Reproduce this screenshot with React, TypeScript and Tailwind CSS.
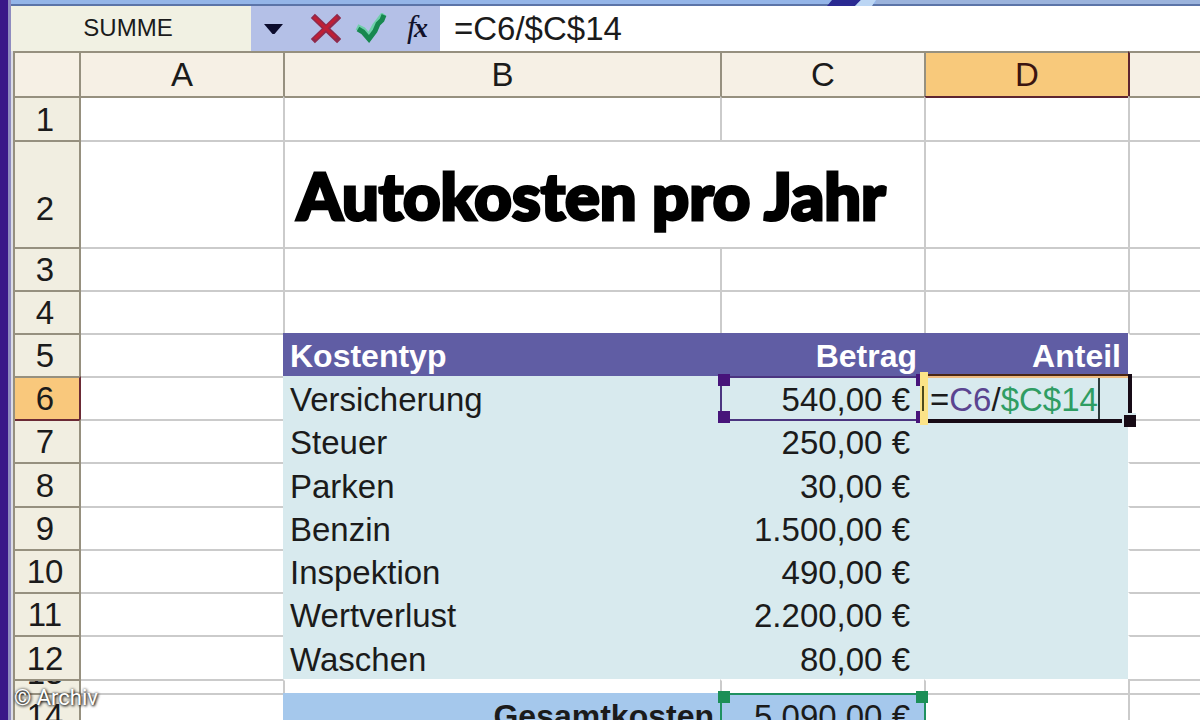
import { clsx } from 'clsx';
import { useState, type ReactNode } from 'react';

type Kind = 'blank' | 'title' | 'head' | 'item' | 'total';

interface Row {
  n: number;
  kind: Kind;
  height: string;
  label?: string;
  amount?: string;
}

const H = 'h-[41px]';
const H_TALL = 'h-[42px]';

const ROWS: Row[] = [
  { n: 1, kind: 'blank', height: H_TALL },
  { n: 2, kind: 'title', height: 'h-[105px]', label: 'Autokosten pro Jahr' },
  { n: 3, kind: 'blank', height: H },
  { n: 4, kind: 'blank', height: H },
  { n: 5, kind: 'head', height: H, label: 'Kostentyp', amount: 'Betrag' },
  { n: 6, kind: 'item', height: H, label: 'Versicherung', amount: '540,00 €' },
  { n: 7, kind: 'item', height: H, label: 'Steuer', amount: '250,00 €' },
  { n: 8, kind: 'item', height: H_TALL, label: 'Parken', amount: '30,00 €' },
  { n: 9, kind: 'item', height: H, label: 'Benzin', amount: '1.500,00 €' },
  { n: 10, kind: 'item', height: H, label: 'Inspektion', amount: '490,00 €' },
  { n: 11, kind: 'item', height: H, label: 'Wertverlust', amount: '2.200,00 €' },
  { n: 12, kind: 'item', height: H_TALL, label: 'Waschen', amount: '80,00 €' },
  { n: 13, kind: 'blank', height: 'h-[12px]' },
  { n: 14, kind: 'total', height: H, label: 'Gesamtkosten', amount: '5.090,00 €' },
];

const FILL: Record<Kind, string> = {
  blank: 'bg-white border-[#cbcbcb]',
  title: 'bg-white border-[#cbcbcb]',
  head: 'bg-[#605da4] border-[#605da4] text-white font-bold text-[32px]',
  item: 'bg-[#d8eaee] border-[#d8eaee]',
  total: 'bg-[#a5c8ec] border-[#a5c8ec]',
};

interface CellProps {
  height: string;
  className?: string;
  inner?: string;
  colSpan?: number;
  first?: boolean;
  overlay?: ReactNode;
  children?: ReactNode;
}

function Cell({ height, className, inner, colSpan, first, overlay, children }: CellProps) {
  return (
    <td colSpan={colSpan} className={clsx('relative border-t-2 p-0', !first && 'border-l-2', className)}>
      <div className={clsx('flex items-end whitespace-nowrap', height, inner)}>{children}</div>
      {overlay}
    </td>
  );
}

// frame around a cell that the formula refers to
function RefFrame({ line, handle }: { line: string; handle: string }) {
  return (
    <div className={clsx('pointer-events-none absolute -top-0.5 -right-0.5 -bottom-0.5 -left-0.5 z-10 border-2', line)}>
      <span className={clsx('absolute -top-1 -left-1 size-3', handle)} />
      <span className={clsx('absolute -top-1 -right-1 size-3', handle)} />
      <span className={clsx('absolute -bottom-1 -left-1 size-3', handle)} />
      <span className={clsx('absolute -right-1 -bottom-1 size-3', handle)} />
    </div>
  );
}

function EditFrame() {
  return (
    <div className="pointer-events-none absolute -top-1 -right-1 -bottom-1 -left-1 z-20">
      <span className="absolute top-0 right-0 left-0 h-1 border-t-2 border-b-2 border-t-[#4a2615] border-b-[#efbb80]" />
      <span className="absolute right-0 bottom-0 left-0 h-1 bg-[#170b16]" />
      <span className="absolute top-0 right-0 bottom-0 w-1 bg-[#170b16]" />
      <span className="absolute -top-0.5 -bottom-0.5 -left-0.5 w-2 bg-[#fbe387]" />
      <span className="absolute top-3 bottom-3 left-0 w-0.5 bg-[#4c4a1c]" />
      <span className="absolute -right-1 -bottom-1 size-3.5 border-t-2 border-l-2 border-[#d8eaee] bg-[#170b16]" />
    </div>
  );
}

function SheetRow({ row }: { row: Row }) {
  const { n, kind, height } = row;
  const plain = kind === 'blank' || kind === 'title';
  const active = n === 6;
  const wide = kind === 'head' || kind === 'item';
  const grid = n === 1 ? 'bg-white border-l-[#cbcbcb]' : FILL.blank;
  const top = n === 1 && 'border-t-[#96907f]';
  // no grid line between the coloured block and the row under it
  const below = n === 13 && 'border-t-white';

  return (
    <tr>
      <th
        scope="row"
        className={clsx(
          'border-t-2 border-r-2 p-0 font-normal',
          active ? 'border-t-[#96907f] border-r-[#6b2a35] bg-[#f9c87c]' : 'border-[#96907f] bg-[#f1eee1]',
          n === 7 && 'border-t-[#6b2a35]',
        )}
      >
        <div className={clsx('flex items-end justify-center overflow-hidden pr-1', height, kind === 'title' ? 'pb-5' : 'pb-0.5')}>
          {n}
        </div>
      </th>
      <Cell first height={height} className={clsx(grid, top)} />
      {kind === 'title' ? (
        <Cell
          height={height}
          colSpan={2}
          className={grid}
          inner="pb-[15px] pl-3 font-['Lato'] text-[65px] leading-[74px] font-black text-black [-webkit-text-stroke:3px_#000]"
        >
          {row.label}
        </Cell>
      ) : (
        <>
          <Cell
            height={height}
            className={clsx(plain ? grid : FILL[kind], top, below)}
            inner={kind === 'total' ? 'justify-end pb-px pr-1.5 font-bold text-[32px]' : 'pb-px pl-[5px]'}
          >
            {row.label}
          </Cell>
          <Cell
            height={height}
            className={clsx(plain ? grid : FILL[kind], top, below)}
            inner={clsx('justify-end pb-px', kind === 'head' ? 'pr-[7px]' : 'pr-3.5')}
            overlay={
              active ? (
                <RefFrame line="border-[#4b3580]" handle="bg-[#47147a]" />
              ) : kind === 'total' ? (
                <RefFrame line="border-[#1f9160]" handle="bg-[#1c8f57]" />
              ) : null
            }
          >
            {row.amount}
          </Cell>
        </>
      )}
      <Cell
        height={height}
        className={clsx(wide ? FILL[kind] : grid, below, n === 1 && 'border-t-[#5e2530]')}
        inner={kind === 'head' ? 'justify-end pb-px pr-[7px]' : 'pl-1'}
        overlay={active && <EditFrame />}
      >
        {kind === 'head' && 'Anteil'}
        {active && (
          <div
            role="textbox"
            aria-label="Zelle D6"
            contentEditable
            suppressContentEditableWarning
            className="flex h-full items-end border-r-2 border-[#2b3a3a] pb-px outline-none"
          >
            <span>=</span>
            <span className="text-[#5a4490]">C6</span>
            <span>/</span>
            <span className="text-[#2f9d63]">$C$14</span>
          </div>
        )}
      </Cell>
      <Cell height={height} className={clsx(grid, top, wide && 'border-l-white')} />
    </tr>
  );
}

function FormulaBar() {
  const [formula, setFormula] = useState('=C6/$C$14');

  return (
    <div className="flex h-[45px] shrink-0 bg-white">
      <input
        aria-label="Namenfeld"
        defaultValue="SUMME"
        className="w-60 bg-[#f1f1e3] pr-1.5 pb-0.5 text-center text-2xl outline-none"
      />
      <div className="flex w-[189px] items-center bg-[#b4c0e7] pl-3">
        <button type="button" aria-label="Namenliste" className="mr-6">
          <svg width="22" height="14" viewBox="0 0 22 14">
            <path d="M1 2H20L11.5 12H9.5z" fill="#0b0b2c" />
          </svg>
        </button>
        <button type="button" aria-label="Abbrechen" className="mr-3.5">
          <svg width="32" height="32" viewBox="0 0 32 32" fill="none" strokeLinecap="square">
            <path d="M6 5L28 26M28 5L6 26" stroke="#8f2a4c" strokeWidth="6" />
            <path d="M6 5L26 24M27 5L7 25" stroke="#c01f35" strokeWidth="3" />
          </svg>
        </button>
        <button type="button" aria-label="Eingeben" className="mr-5">
          <svg width="32" height="32" viewBox="0 0 32 32" fill="none">
            <path d="M2 14L8 17L14 24L20 13L29 1" stroke="#6fcfaa" strokeWidth="6" />
            <path d="M3 16L8 19L14 26L20 18L23 11L27 7L29 2" stroke="#17884f" strokeWidth="5" />
          </svg>
        </button>
        <button
          type="button"
          aria-label="Funktion einfügen"
          className="flex items-baseline pb-1 font-['Liberation_Serif',serif] leading-8 text-[#11112b] italic"
        >
          <span className="text-[32px]">f</span>
          <span className="-ml-0.5 text-[28px] font-bold">x</span>
        </button>
      </div>
      <input
        aria-label="Bearbeitungsleiste"
        value={formula}
        onChange={(e) => setFormula(e.target.value)}
        className="min-w-0 flex-1 bg-white pl-3.5 outline-none"
      />
    </div>
  );
}

export default function App() {
  return (
    <div className="relative flex h-screen overflow-hidden bg-white font-['Liberation_Sans',Arial,sans-serif] text-[33px] leading-[37px] text-[#1b1b1b]">
      <div className="w-[11px] shrink-0 border-r-[3px] border-[#8f8cbf] bg-[#3a1788]" />

      <div className="flex min-w-0 flex-1 flex-col">
        <div className="flex h-1.5 shrink-0 border-b-2 border-[#5b74a8] bg-[#94b5e8]">
          <div className="w-[815px] shrink-0" />
          <svg width="50" height="6" viewBox="0 0 50 6" className="shrink-0">
            <path d="M6 0H35L29 6H1z" fill="#2a2a92" />
            <path d="M35 0H50L46 6H29z" fill="#bcd6f4" />
          </svg>
          <div className="flex-1 bg-[#9bb3dc]" />
        </div>

        <FormulaBar />

        <div className="flex-1 bg-[#dcdce6] pl-0.5">
          <table className="w-full table-fixed border-separate border-spacing-0 border-l-2 border-[#96907f]">
            <colgroup>
              <col className="w-[66px]" />
              <col className="w-[202px]" />
              <col className="w-[437px]" />
              <col className="w-[204px]" />
              <col className="w-[204px]" />
              <col />
            </colgroup>
            <thead>
              <tr className="bg-[#f6f0e5]">
                <td className="border-t-2 border-r-2 border-[#96907f] p-0" />
                {['A', 'B', 'C', 'D', ''].map((name) => (
                  <th
                    key={name}
                    scope="col"
                    className={clsx(
                      'h-[45px] border-t-2 border-[#96907f] p-0 font-normal',
                      name !== 'A' && 'border-l-2',
                      name === 'D' && 'bg-[#f8c97b] text-[#3b1410]',
                      name === '' && 'border-l-[#5e2530]',
                    )}
                  >
                    {name}
                  </th>
                ))}
              </tr>
            </thead>
            <tbody>
              {ROWS.map((row) => (
                <SheetRow key={row.n} row={row} />
              ))}
            </tbody>
          </table>
        </div>
      </div>

      <p className="absolute bottom-2 left-3.5 z-30 font-['Roboto'] text-[22px] leading-7 text-white [text-shadow:1px_1px_3px_#000,0_0_3px_#444]">
        © Archiv
      </p>
    </div>
  );
}
